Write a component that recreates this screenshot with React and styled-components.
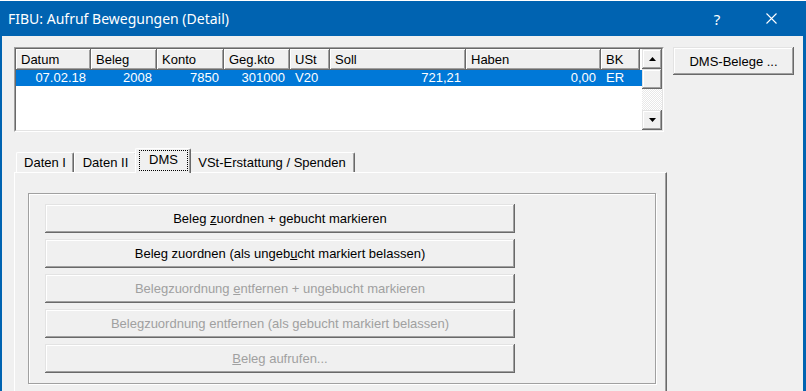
import styled, { createGlobalStyle } from 'styled-components';

const GlobalStyle = createGlobalStyle`
  html, body {
    margin: 0;
    padding: 0;
    background: #f0f0f0;
  }
  body {
    font-family: 'Liberation Sans', Arial, sans-serif;
    font-size: 13px;
    color: #000;
  }
`;

const Window = styled.div`
  width: 806px;
  height: 391px;
  box-sizing: border-box;
  border-top: 1px solid #ffffff;
  background: #0063b1;
  display: flex;
  flex-direction: column;
  overflow: hidden;
`;

const TitleBar = styled.div`
  height: 35px;
  flex: none;
  display: flex;
  align-items: center;
  padding-left: 8px;
  color: #ffffff;
  font-family: 'Noto Sans', 'Liberation Sans', sans-serif;
  font-size: 14px;
`;

const TitleText = styled.span`
  flex: 1;
`;

const TitleButton = styled.div`
  width: 40px;
  height: 35px;
  display: flex;
  align-items: center;
  justify-content: center;
  font-size: 15px;
`;

const TitleButtons = styled.div`
  display: flex;
  gap: 14px;
  padding-right: 15px;
`;

const Body = styled.div`
  flex: 1;
  margin: 0 3px 0 2px;
  background: #f0f0f0;
  padding: 11px 0 0 12px;
  display: flex;
  flex-direction: column;
`;

const TopRow = styled.div`
  display: flex;
  align-items: flex-start;
`;

const ListOuter = styled.div`
  width: 650px;
  height: 85px;
  box-sizing: border-box;
  border: 1px solid;
  border-color: #a0a0a0 #ffffff #ffffff #a0a0a0;
`;

const ListInner = styled.div`
  height: 100%;
  box-sizing: border-box;
  border: 1px solid;
  border-color: #696969 #e3e3e3 #e3e3e3 #696969;
  background: #ffffff;
  display: flex;
`;

const Grid = styled.div`
  flex: 1;
  display: flex;
  flex-direction: column;
`;

const HeaderRow = styled.div`
  display: flex;
  height: 21px;
`;

const HeaderCell = styled.div`
  width: ${(p) => p.w}px;
  box-sizing: border-box;
  padding-left: 5px;
  display: flex;
  align-items: center;
  background: #f0f0f0;
  border-right: 1px solid #696969;
  border-bottom: 1px solid #696969;
  box-shadow: inset 1px 1px #ffffff, inset -1px -1px #a0a0a0;
`;

const DataRow = styled.div`
  display: flex;
  height: 16px;
  background: ${(p) => (p.selected ? '#0078d7' : 'transparent')};
  color: ${(p) => (p.selected ? '#ffffff' : '#000000')};
`;

const Cell = styled.div`
  width: ${(p) => p.w}px;
  box-sizing: border-box;
  padding: 0 5px;
  line-height: 16px;
  text-align: ${(p) => p.align};
  white-space: nowrap;
`;

const ScrollBar = styled.div`
  width: 20px;
  display: flex;
  flex-direction: column;
`;

const Raised = styled.div`
  background: #f0f0f0;
  box-shadow: inset -1px -1px #696969, inset 1px 1px #e3e3e3,
    inset -2px -2px #a0a0a0, inset 2px 2px #ffffff;
`;

const ScrollButton = styled(Raised)`
  height: 20px;
  flex: none;
  display: flex;
  align-items: center;
  justify-content: center;
`;

const Track = styled.div`
  flex: 1;
  background-color: #f0f0f0;
  background-image: repeating-conic-gradient(#ffffff 0 25%, #e8e8e8 0 50%);
  background-size: 2px 2px;
`;

const Button = styled(Raised)`
  height: ${(p) => p.h || 29}px;
  width: ${(p) => p.w}px;
  flex: none;
  display: flex;
  align-items: center;
  justify-content: center;
  color: ${(p) => (p.disabled ? '#a0a0a0' : '#000000')};
  white-space: nowrap;
`;

const SideButton = styled(Button)`
  margin-left: 9px;
`;

const Key = styled.span`
  text-decoration: underline;
`;

const TabRow = styled.div`
  display: flex;
  align-items: flex-end;
  height: 24px;
  margin-top: 16px;
  padding-left: 2px;
  position: relative;
  z-index: 1;
`;

const Tab = styled.div`
  width: ${(p) => p.w}px;
  height: ${(p) => (p.active ? 25 : 20)}px;
  margin: ${(p) => (p.active ? '0 -2px -1px' : '0')};
  position: relative;
  z-index: ${(p) => (p.active ? 2 : 1)};
  box-sizing: border-box;
  border-top: 1px solid #ffffff;
  border-left: 1px solid #ffffff;
  border-right: 1px solid #696969;
  border-radius: 2px 2px 0 0;
  box-shadow: inset -1px 0 #a0a0a0;
  background: #f0f0f0;
  display: flex;
  align-items: center;
  justify-content: center;
  white-space: nowrap;
`;

const FocusLabel = styled.div`
  align-self: stretch;
  flex: 1;
  margin: 1px 2px 2px 3px;
  border: 1px dotted #000000;
  display: flex;
  align-items: center;
  justify-content: center;
  padding-bottom: 2px;
`;

const Panel = styled.div`
  width: 653px;
  height: 260px;
  flex: none;
  box-sizing: border-box;
  border-top: 1px solid #ffffff;
  border-left: 1px solid #ffffff;
  border-right: 1px solid #696969;
  box-shadow: inset -1px 0 #a0a0a0;
  padding: 20px 0 0 13px;
`;

const GroupBox = styled.div`
  width: 628px;
  height: 191px;
  box-sizing: border-box;
  border: 1px solid #a0a0a0;
  box-shadow: inset 1px 1px #ffffff, 1px 1px #ffffff;
  padding: 10px 0 0 16px;
  display: flex;
  flex-direction: column;
  gap: 6px;
`;

const Arrow = ({ down }) => (
  <svg width="7" height="4" viewBox="0 0 7 4">
    <polygon points={down ? '0,0 7,0 3.5,4' : '0,4 7,4 3.5,0'} fill="#000" />
  </svg>
);

const CloseIcon = () => (
  <svg width="11" height="11" viewBox="0 0 11 11">
    <path d="M0.5 0.5 L10.5 10.5 M10.5 0.5 L0.5 10.5" stroke="#fff" strokeWidth="1.1" />
  </svg>
);

const columns = [
  { title: 'Datum', w: 75, align: 'right', value: '07.02.18' },
  { title: 'Beleg', w: 66, align: 'right', value: '2008' },
  { title: 'Konto', w: 67, align: 'right', value: '7850' },
  { title: 'Geg.kto', w: 66, align: 'right', value: '301000' },
  { title: 'USt', w: 40, align: 'left', value: 'V20' },
  { title: 'Soll', w: 136, align: 'right', value: '721,21' },
  { title: 'Haben', w: 135, align: 'right', value: '0,00' },
  { title: 'BK', w: 39, align: 'left', value: 'ER' },
];

const tabs = [
  { label: 'Daten I', w: 58 },
  { label: 'Daten II', w: 63 },
  { label: 'DMS', w: 56, active: true },
  { label: 'VSt-Erstattung / Spenden', w: 166 },
];

export default function App() {
  return (
    <>
      <GlobalStyle />
      <Window>
        <TitleBar>
          <TitleText>FIBU: Aufruf Bewegungen (Detail)</TitleText>
          <TitleButtons>
            <TitleButton>?</TitleButton>
            <TitleButton>
              <CloseIcon />
            </TitleButton>
          </TitleButtons>
        </TitleBar>
        <Body>
          <TopRow>
            <ListOuter>
              <ListInner>
                <Grid>
                  <HeaderRow>
                    {columns.map((c) => (
                      <HeaderCell key={c.title} w={c.w}>
                        {c.title}
                      </HeaderCell>
                    ))}
                  </HeaderRow>
                  <DataRow selected>
                    {columns.map((c) => (
                      <Cell key={c.title} w={c.w} align={c.align}>
                        {c.value}
                      </Cell>
                    ))}
                  </DataRow>
                </Grid>
                <ScrollBar>
                  <ScrollButton>
                    <Arrow />
                  </ScrollButton>
                  <ScrollButton />
                  <Track />
                  <ScrollButton>
                    <Arrow down />
                  </ScrollButton>
                </ScrollBar>
              </ListInner>
            </ListOuter>
            <SideButton w={121} h={28}>
              DMS-Belege ...
            </SideButton>
          </TopRow>

          <TabRow>
            {tabs.map((t) =>
              t.active ? (
                <Tab key={t.label} w={t.w} active>
                  <FocusLabel>{t.label}</FocusLabel>
                </Tab>
              ) : (
                <Tab key={t.label} w={t.w}>
                  {t.label}
                </Tab>
              )
            )}
          </TabRow>
          <Panel>
            <GroupBox>
              <Button w={470}>
                Beleg&nbsp;<Key>z</Key>uordnen + gebucht markieren
              </Button>
              <Button w={470}>
                Beleg zuordnen (als ungeb<Key>u</Key>cht markiert belassen)
              </Button>
              <Button w={470} disabled>
                Belegzuordnung&nbsp;<Key>e</Key>ntfernen + ungebucht markieren
              </Button>
              <Button w={470} disabled>
                Belegzuordnung entfernen (als&nbsp;<Key>g</Key>ebucht markiert belassen)
              </Button>
              <Button w={470} disabled>
                <Key>B</Key>eleg aufrufen...
              </Button>
            </GroupBox>
          </Panel>
        </Body>
      </Window>
    </>
  );
}
